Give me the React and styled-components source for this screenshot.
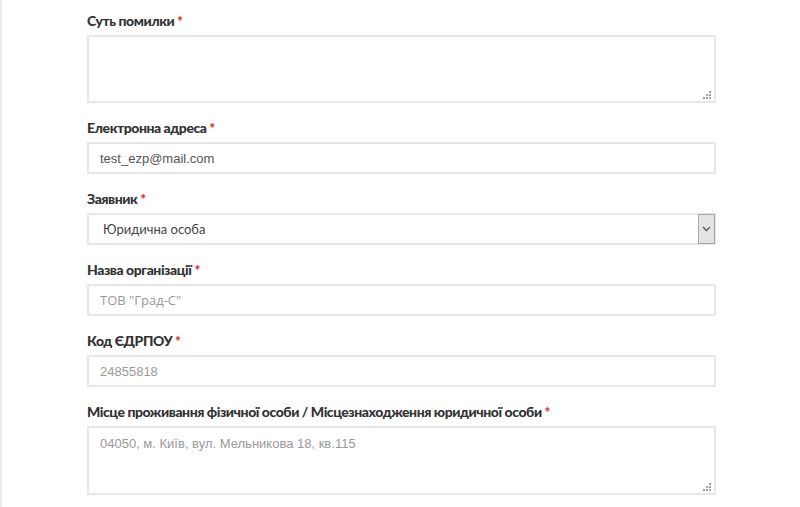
import React from 'react';
import styled, { createGlobalStyle } from 'styled-components';

const GlobalStyle = createGlobalStyle`
  html, body {
    margin: 0;
    padding: 0;
    background: #fff;
  }
  body {
    font-family: 'Liberation Sans', Arial, sans-serif;
  }
`;

// resize grip like the old dotted one
const grip =
  "url(\"data:image/svg+xml,%3Csvg xmlns='http://www.w3.org/2000/svg' width='8' height='8'%3E%3Cg fill='%23a0a0a0'%3E%3Crect x='6' y='0' width='2' height='2'/%3E%3Crect x='6' y='3' width='2' height='2'/%3E%3Crect x='3' y='3' width='2' height='2'/%3E%3Crect x='6' y='6' width='2' height='2'/%3E%3Crect x='3' y='6' width='2' height='2'/%3E%3Crect x='0' y='6' width='2' height='2'/%3E%3C/g%3E%3C/svg%3E\")";

function App() {
  return (
    <>
      <GlobalStyle />
      <Page>
        <Form>
          <Field>
            <Label>
              Суть помилки <Star>*</Star>
            </Label>
            <TextArea rows={3} height={68} />
          </Field>
          <Field>
            <Label>
              Електронна адреса <Star>*</Star>
            </Label>
            <Input defaultValue="test_ezp@mail.com" />
          </Field>
          <Field>
            <Label>
              Заявник <Star>*</Star>
            </Label>
            <SelectBox>
              <Select defaultValue="legal">
                <option value="legal">Юридична особа</option>
                <option value="person">Фізична особа</option>
              </Select>
              <ArrowBox>
                <svg width="9" height="6" viewBox="0 0 9 6" fill="none">
                  <path d="M1 1l3.5 3.5L8 1" stroke="#555" strokeWidth="1.3" />
                </svg>
              </ArrowBox>
            </SelectBox>
          </Field>
          <Field>
            <Label>
              Назва організації <Star>*</Star>
            </Label>
            <Input placeholder='ТОВ "Град-С"' soft />
          </Field>
          <Field>
            <Label>
              Код ЄДРПОУ <Star>*</Star>
            </Label>
            <Input placeholder="24855818" />
          </Field>
          <Field>
            <Label>
              Місце проживання фізичної особи / Місцезнаходження юридичної особи <Star>*</Star>
            </Label>
            <TextArea
              rows={3}
              height={69}
              placeholder="04050, м. Київ, вул. Мельникова 18, кв.115"
            />
          </Field>
        </Form>
      </Page>
    </>
  );
}

export default App;

const Page = styled.div`
  min-height: 507px;
  border-left: 2px solid #ececef;
  box-sizing: border-box;
`;

const Form = styled.form`
  width: 629px;
  margin-left: 85px;
  padding-top: 11px;
  display: flex;
  flex-direction: column;
  gap: 15px;
`;

const Field = styled.div`
  display: flex;
  flex-direction: column;
  gap: 4px;
`;

const Label = styled.label`
  font-family: 'Lato', 'Open Sans', sans-serif;
  font-weight: 900;
  font-size: 14px;
  letter-spacing: -0.45px;
  line-height: 20px;
  color: #333;
`;

const Star = styled.span`
  color: #e0262c;
`;

const fieldBase = `
  box-sizing: border-box;
  width: 100%;
  border: 2px solid #e5e6ea;
  border-radius: 0;
  background: #fff;
  outline: none;
  margin: 0;
`;

const Input = styled.input`
  ${fieldBase}
  height: 32px;
  padding: 0 11px;
  font-family: ${({ soft }) => (soft ? "'Open Sans', sans-serif" : "'Liberation Sans', Arial, sans-serif")};
  font-size: 13px;
  color: #555;

  &::placeholder {
    color: #9a9a9a;
  }
`;

const TextArea = styled.textarea`
  ${fieldBase}
  height: ${({ height }) => height}px;
  padding: 8px 11px;
  font-family: 'Liberation Sans', Arial, sans-serif;
  font-size: 13px;
  color: #555;
  resize: none;
  background: #fff ${grip} no-repeat right 3px bottom 2px;

  &::placeholder {
    color: #9a9a9a;
  }
`;

const SelectBox = styled.div`
  ${fieldBase}
  height: 32px;
  display: flex;
  align-items: stretch;
`;

const Select = styled.select`
  flex: 1;
  appearance: none;
  border: none;
  outline: none;
  background: transparent;
  padding: 0 14px;
  font-family: 'Lato', 'Open Sans', sans-serif;
  font-size: 13px;
  color: #444;
`;

const ArrowBox = styled.div`
  width: 15px;
  margin: -1px -1px -1px 0;
  background: #e3e3e3;
  border: 1px solid #a8a8a8;
  display: flex;
  align-items: center;
  justify-content: center;
  pointer-events: none;
`;
